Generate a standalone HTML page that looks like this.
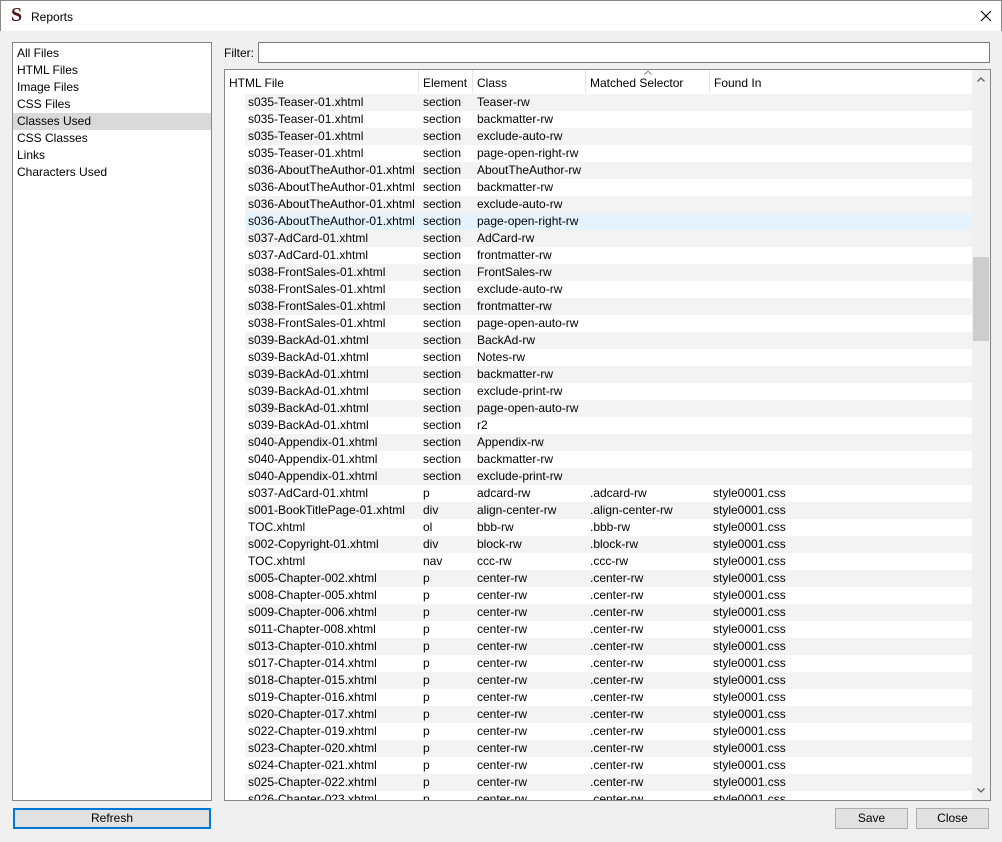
<!DOCTYPE html>
<html><head><meta charset="utf-8"><style>
*{box-sizing:border-box;margin:0;padding:0}
body{width:1002px;height:842px;background:#f0f0f0;font-family:"Liberation Sans",sans-serif;font-size:12px;color:#000;position:relative;overflow:hidden}
.title{position:absolute;left:0;top:0;width:1002px;height:31px;background:#fff;border:1px solid #888;border-bottom:none}
.title .logo{position:absolute;left:10px;top:3px;font-family:"Liberation Serif",serif;font-weight:bold;font-size:20px;color:#4a1c1c}
.title .t{position:absolute;left:30px;top:9px;font-size:12px}
.list{position:absolute;left:12px;top:42px;width:200px;height:759px;background:#fff;border:1px solid #828790;padding-top:2px}
.list div{height:17px;line-height:17px;padding-left:4px}
.list .sel{background:#d9d9d9}
.flabel{position:absolute;left:224px;top:46px}
.filter{position:absolute;left:258px;top:42px;width:732px;height:21px;background:#fff;border:1px solid #7a7a7a}
.table{position:absolute;left:224px;top:69px;width:767px;height:732px;background:#fff;border:1px solid #828790;overflow:hidden}
.hdr{position:absolute;left:0;top:0;width:747px;height:23px;background:#fff}
.hdr span{position:absolute;top:6px}
.hdr i{position:absolute;top:0;width:1px;height:23px;background:#e5e5e5}
.rows{position:absolute;left:20px;top:24px;width:727px}
.r{height:17px;line-height:17px;position:relative;white-space:nowrap}
.r:nth-child(odd){background:#f3f3f3}
.r.h{background:#e5f3ff}
.r span{position:absolute;top:0}
.c1{left:3px}.c2{left:178px}.c3{left:232px}.c4{left:345px}.c5{left:468px}
.sb{position:absolute;left:747px;top:0;width:18px;height:730px;background:#f0f0f0}
.thumb{position:absolute;left:1px;top:187px;width:16px;height:84px;background:#cdcdcd}
.btn{position:absolute;height:21px;background:#e1e1e1;border:1px solid #adadad;text-align:center;line-height:19px}
</style></head><body>
<div class="title"><span class="logo">S</span><span class="t">Reports</span>
<svg style="position:absolute;left:979px;top:9px" width="12" height="12" viewBox="0 0 12 12"><path d="M1 1L11 11M11 1L1 11" stroke="#000" stroke-width="1.1" fill="none"/></svg></div>
<div class="list">
<div>All Files</div><div>HTML Files</div><div>Image Files</div><div>CSS Files</div><div class="sel">Classes Used</div><div>CSS Classes</div><div>Links</div><div>Characters Used</div>
</div>
<div class="flabel">Filter:</div>
<div class="filter"></div>
<div class="table">
<div class="hdr"><span style="left:4px">HTML File</span><i style="left:193px"></i><span style="left:198px">Element</span><i style="left:247px"></i><span style="left:252px">Class</span><i style="left:360px"></i><span style="left:365px">Matched Selector</span>
<svg style="position:absolute;left:419px;top:0" width="8" height="5" viewBox="0 0 8 5"><path d="M0.5 4.5L4 1L7.5 4.5" stroke="#888" fill="none"/></svg>
<i style="left:484px"></i><span style="left:489px">Found In</span></div>
<div class="rows">
<div class="r"><span class="c1">s035-Teaser-01.xhtml</span><span class="c2">section</span><span class="c3">Teaser-rw</span></div>
<div class="r"><span class="c1">s035-Teaser-01.xhtml</span><span class="c2">section</span><span class="c3">backmatter-rw</span></div>
<div class="r"><span class="c1">s035-Teaser-01.xhtml</span><span class="c2">section</span><span class="c3">exclude-auto-rw</span></div>
<div class="r"><span class="c1">s035-Teaser-01.xhtml</span><span class="c2">section</span><span class="c3">page-open-right-rw</span></div>
<div class="r"><span class="c1">s036-AboutTheAuthor-01.xhtml</span><span class="c2">section</span><span class="c3">AboutTheAuthor-rw</span></div>
<div class="r"><span class="c1">s036-AboutTheAuthor-01.xhtml</span><span class="c2">section</span><span class="c3">backmatter-rw</span></div>
<div class="r"><span class="c1">s036-AboutTheAuthor-01.xhtml</span><span class="c2">section</span><span class="c3">exclude-auto-rw</span></div>
<div class="r h"><span class="c1">s036-AboutTheAuthor-01.xhtml</span><span class="c2">section</span><span class="c3">page-open-right-rw</span></div>
<div class="r"><span class="c1">s037-AdCard-01.xhtml</span><span class="c2">section</span><span class="c3">AdCard-rw</span></div>
<div class="r"><span class="c1">s037-AdCard-01.xhtml</span><span class="c2">section</span><span class="c3">frontmatter-rw</span></div>
<div class="r"><span class="c1">s038-FrontSales-01.xhtml</span><span class="c2">section</span><span class="c3">FrontSales-rw</span></div>
<div class="r"><span class="c1">s038-FrontSales-01.xhtml</span><span class="c2">section</span><span class="c3">exclude-auto-rw</span></div>
<div class="r"><span class="c1">s038-FrontSales-01.xhtml</span><span class="c2">section</span><span class="c3">frontmatter-rw</span></div>
<div class="r"><span class="c1">s038-FrontSales-01.xhtml</span><span class="c2">section</span><span class="c3">page-open-auto-rw</span></div>
<div class="r"><span class="c1">s039-BackAd-01.xhtml</span><span class="c2">section</span><span class="c3">BackAd-rw</span></div>
<div class="r"><span class="c1">s039-BackAd-01.xhtml</span><span class="c2">section</span><span class="c3">Notes-rw</span></div>
<div class="r"><span class="c1">s039-BackAd-01.xhtml</span><span class="c2">section</span><span class="c3">backmatter-rw</span></div>
<div class="r"><span class="c1">s039-BackAd-01.xhtml</span><span class="c2">section</span><span class="c3">exclude-print-rw</span></div>
<div class="r"><span class="c1">s039-BackAd-01.xhtml</span><span class="c2">section</span><span class="c3">page-open-auto-rw</span></div>
<div class="r"><span class="c1">s039-BackAd-01.xhtml</span><span class="c2">section</span><span class="c3">r2</span></div>
<div class="r"><span class="c1">s040-Appendix-01.xhtml</span><span class="c2">section</span><span class="c3">Appendix-rw</span></div>
<div class="r"><span class="c1">s040-Appendix-01.xhtml</span><span class="c2">section</span><span class="c3">backmatter-rw</span></div>
<div class="r"><span class="c1">s040-Appendix-01.xhtml</span><span class="c2">section</span><span class="c3">exclude-print-rw</span></div>
<div class="r"><span class="c1">s037-AdCard-01.xhtml</span><span class="c2">p</span><span class="c3">adcard-rw</span><span class="c4">.adcard-rw</span><span class="c5">style0001.css</span></div>
<div class="r"><span class="c1">s001-BookTitlePage-01.xhtml</span><span class="c2">div</span><span class="c3">align-center-rw</span><span class="c4">.align-center-rw</span><span class="c5">style0001.css</span></div>
<div class="r"><span class="c1">TOC.xhtml</span><span class="c2">ol</span><span class="c3">bbb-rw</span><span class="c4">.bbb-rw</span><span class="c5">style0001.css</span></div>
<div class="r"><span class="c1">s002-Copyright-01.xhtml</span><span class="c2">div</span><span class="c3">block-rw</span><span class="c4">.block-rw</span><span class="c5">style0001.css</span></div>
<div class="r"><span class="c1">TOC.xhtml</span><span class="c2">nav</span><span class="c3">ccc-rw</span><span class="c4">.ccc-rw</span><span class="c5">style0001.css</span></div>
<div class="r"><span class="c1">s005-Chapter-002.xhtml</span><span class="c2">p</span><span class="c3">center-rw</span><span class="c4">.center-rw</span><span class="c5">style0001.css</span></div>
<div class="r"><span class="c1">s008-Chapter-005.xhtml</span><span class="c2">p</span><span class="c3">center-rw</span><span class="c4">.center-rw</span><span class="c5">style0001.css</span></div>
<div class="r"><span class="c1">s009-Chapter-006.xhtml</span><span class="c2">p</span><span class="c3">center-rw</span><span class="c4">.center-rw</span><span class="c5">style0001.css</span></div>
<div class="r"><span class="c1">s011-Chapter-008.xhtml</span><span class="c2">p</span><span class="c3">center-rw</span><span class="c4">.center-rw</span><span class="c5">style0001.css</span></div>
<div class="r"><span class="c1">s013-Chapter-010.xhtml</span><span class="c2">p</span><span class="c3">center-rw</span><span class="c4">.center-rw</span><span class="c5">style0001.css</span></div>
<div class="r"><span class="c1">s017-Chapter-014.xhtml</span><span class="c2">p</span><span class="c3">center-rw</span><span class="c4">.center-rw</span><span class="c5">style0001.css</span></div>
<div class="r"><span class="c1">s018-Chapter-015.xhtml</span><span class="c2">p</span><span class="c3">center-rw</span><span class="c4">.center-rw</span><span class="c5">style0001.css</span></div>
<div class="r"><span class="c1">s019-Chapter-016.xhtml</span><span class="c2">p</span><span class="c3">center-rw</span><span class="c4">.center-rw</span><span class="c5">style0001.css</span></div>
<div class="r"><span class="c1">s020-Chapter-017.xhtml</span><span class="c2">p</span><span class="c3">center-rw</span><span class="c4">.center-rw</span><span class="c5">style0001.css</span></div>
<div class="r"><span class="c1">s022-Chapter-019.xhtml</span><span class="c2">p</span><span class="c3">center-rw</span><span class="c4">.center-rw</span><span class="c5">style0001.css</span></div>
<div class="r"><span class="c1">s023-Chapter-020.xhtml</span><span class="c2">p</span><span class="c3">center-rw</span><span class="c4">.center-rw</span><span class="c5">style0001.css</span></div>
<div class="r"><span class="c1">s024-Chapter-021.xhtml</span><span class="c2">p</span><span class="c3">center-rw</span><span class="c4">.center-rw</span><span class="c5">style0001.css</span></div>
<div class="r"><span class="c1">s025-Chapter-022.xhtml</span><span class="c2">p</span><span class="c3">center-rw</span><span class="c4">.center-rw</span><span class="c5">style0001.css</span></div>
<div class="r"><span class="c1">s026-Chapter-023.xhtml</span><span class="c2">p</span><span class="c3">center-rw</span><span class="c4">.center-rw</span><span class="c5">style0001.css</span></div>
</div>
<div class="sb">
<svg style="position:absolute;left:5px;top:7px" width="8" height="5" viewBox="0 0 8 5"><path d="M0.5 4.5L4 1L7.5 4.5" stroke="#606060" stroke-width="1.3" fill="none"/></svg>
<div class="thumb"></div>
<svg style="position:absolute;left:5px;top:718px" width="8" height="5" viewBox="0 0 8 5"><path d="M0.5 0.5L4 4L7.5 0.5" stroke="#606060" stroke-width="1.3" fill="none"/></svg>
</div>
</div>
<div class="btn" style="left:13px;top:808px;width:198px;border:2px solid #0078d7;line-height:17px">Refresh</div>
<div class="btn" style="left:835px;top:808px;width:73px">Save</div>
<div class="btn" style="left:916px;top:808px;width:73px">Close</div>
</body></html>
